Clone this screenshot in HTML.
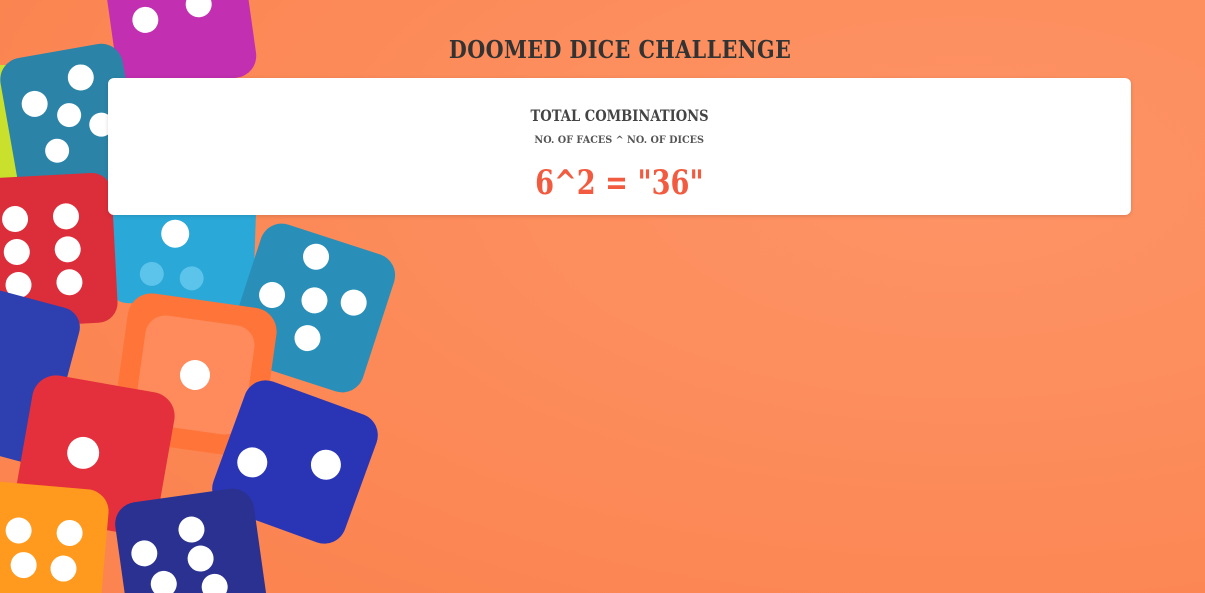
<!DOCTYPE html>
<html><head><meta charset="utf-8"><style>
html,body{margin:0;padding:0;width:1205px;height:593px;overflow:hidden;background:#fd8b5a;font-family:"DejaVu Serif","Liberation Serif",serif;}
svg.bg{position:absolute;left:0;top:0;display:block}
.c{position:absolute;left:0;width:1240px;text-align:center;white-space:nowrap}
.c span{display:inline-block;font-weight:900}
h1{margin:0;top:28px;left:0}
h1 span{font-size:24px;color:#333;transform:scaleX(0.86);letter-spacing:0.5px}
.card{position:absolute;left:108px;top:78px;width:1023px;height:137px;background:#fff;border-radius:6px;box-shadow:0 1px 4px rgba(0,0,0,.15);overflow:hidden}
.card .c{left:0;width:1023px}
.t{top:28px}.t span{font-size:16px;color:#444;transform:scaleX(0.82)}
.s{top:50px}.s span{font-size:10.5px;color:#555;transform:scaleX(0.92)}
.r{top:85px}.r span{font-size:34px;color:#f25b3f;line-height:40px;transform:scaleX(0.8)}
</style></head><body>
<svg class="bg" width="1205" height="593" viewBox="0 0 1205 593">
<defs><radialGradient id="g" cx="0.8" cy="0.3" r="0.9"><stop offset="0" stop-color="#fe9466"/><stop offset="1" stop-color="#fb8450"/></radialGradient></defs>
<rect width="1205" height="593" fill="url(#g)"/>
<g fill="#fff">
<g transform="translate(180,15) rotate(-8)"><rect x="-70" y="-70" width="140" height="140" rx="22" fill="#c22fb0"/><circle cx="-35" cy="0" r="13"/><circle cx="20" cy="-8" r="13"/></g>
<rect x="-20" y="65" width="60" height="130" rx="15" fill="#c9e02c"/>
<g transform="translate(70,120) rotate(-10)"><rect x="-62" y="-70" width="124" height="140" rx="22" fill="#2b84a8"/><circle cx="-32" cy="-22" r="13"/><circle cx="18" cy="-40" r="13"/><circle cx="0" cy="-5" r="12"/><circle cx="30" cy="10" r="12"/><circle cx="-18" cy="28" r="12"/></g>
<g transform="translate(183,240) rotate(2)"><rect x="-72" y="-70" width="144" height="135" rx="18" fill="#2aa8d8"/><circle cx="-8" cy="-6" r="14"/><circle cx="-30" cy="35" r="12" fill="#5cc3ea"/><circle cx="10" cy="38" r="12" fill="#5cc3ea"/></g>
<g transform="translate(55,255) rotate(-3)"><rect x="-70" y="-80" width="130" height="150" rx="20" fill="#dc2e3a"/><circle cx="-38" cy="-38" r="13"/><circle cx="13" cy="-38" r="13"/><circle cx="-38" cy="-5" r="13"/><circle cx="13" cy="-5" r="13"/><circle cx="-38" cy="28" r="13"/><circle cx="13" cy="28" r="13"/></g>
<g transform="translate(312,308) rotate(18)"><rect x="-70" y="-72" width="140" height="144" rx="22" fill="#2a8fb8"/><circle cx="-12" cy="-50" r="13"/><circle cx="-42" cy="0" r="13"/><circle cx="0" cy="-8" r="13"/><circle cx="38" cy="-18" r="13"/><circle cx="5" cy="30" r="13"/></g>
<g transform="translate(25,380) rotate(15)"><rect x="-70" y="-80" width="110" height="160" rx="20" fill="#2e3fb0"/></g>
<g transform="translate(195,375) rotate(8)"><rect x="-75" y="-75" width="150" height="150" rx="24" fill="#ff7438"/><rect x="-55" y="-55" width="110" height="110" rx="20" fill="#ff8a5c"/><circle cx="0" cy="0" r="15"/></g>
<g transform="translate(95,455) rotate(10)"><rect x="-72" y="-72" width="144" height="144" rx="24" fill="#e4303c"/><circle cx="-12" cy="0" r="16"/></g>
<g transform="translate(295,462) rotate(20)"><rect x="-70" y="-68" width="140" height="136" rx="22" fill="#2a35b5"/><circle cx="-40" cy="15" r="15"/><circle cx="30" cy="-8" r="15"/></g>
<g transform="translate(35,550) rotate(5)"><rect x="-70" y="-65" width="140" height="130" rx="22" fill="#ff9a1e"/><circle cx="-18" cy="-18" r="13"/><circle cx="33" cy="-20" r="13"/><circle cx="-10" cy="16" r="13"/><circle cx="30" cy="16" r="13"/></g>
<g transform="translate(190,555) rotate(-8)"><rect x="-70" y="-60" width="140" height="130" rx="22" fill="#2a3190"/><circle cx="-45" cy="-8" r="13"/><circle cx="5" cy="-25" r="13"/><circle cx="10" cy="5" r="13"/><circle cx="-30" cy="25" r="13"/><circle cx="20" cy="35" r="13"/></g>
</g>
</svg>
<h1 class="c"><span>DOOMED DICE CHALLENGE</span></h1>
<div class="card">
<div class="c t"><span>TOTAL COMBINATIONS</span></div>
<div class="c s"><span>NO. OF FACES ^ NO. OF DICES</span></div>
<div class="c r"><span>6^2 = "36"</span></div>
</div>
</body></html>
